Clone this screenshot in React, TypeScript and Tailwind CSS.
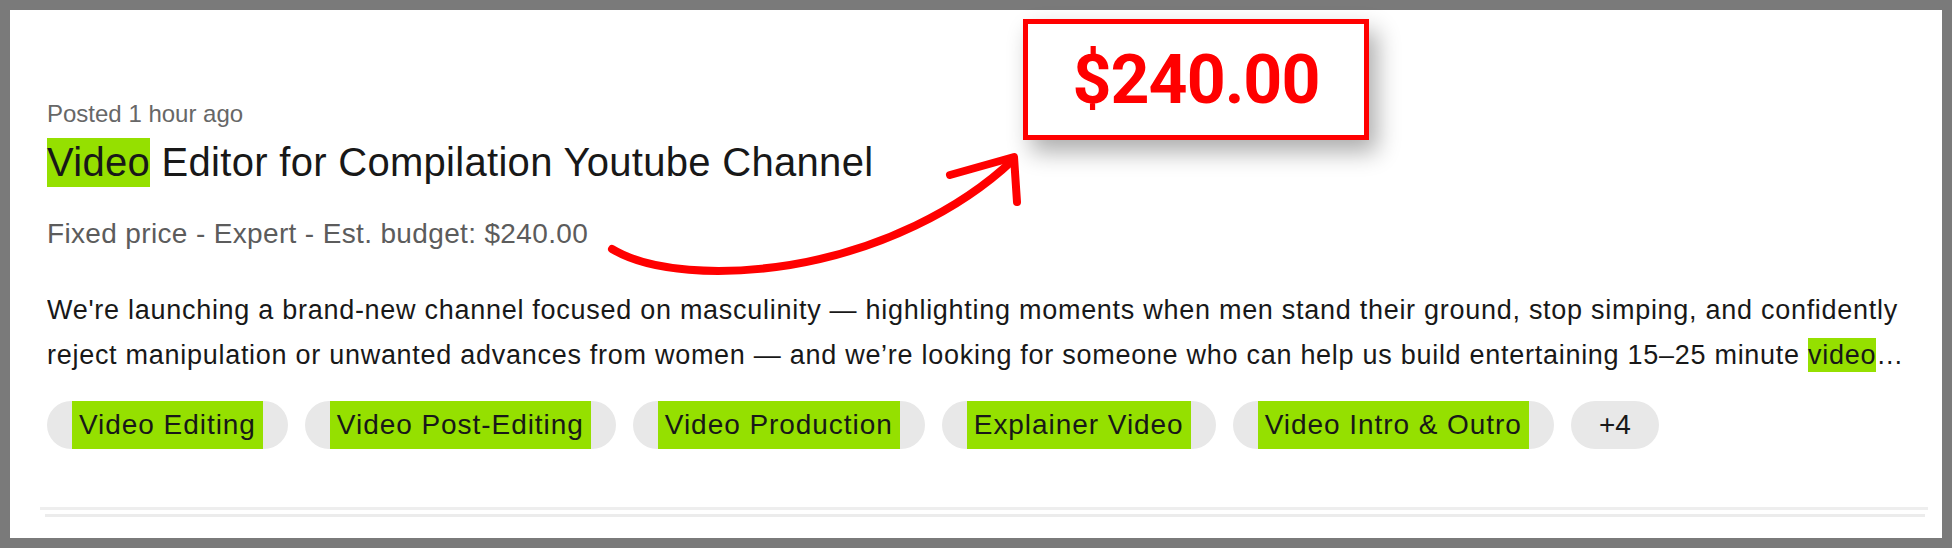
import React from 'react';

const tags = ['Video Editing', 'Video Post-Editing', 'Video Production', 'Explainer Video', 'Video Intro & Outro'];

const sans = { fontFamily: '"Liberation Sans", Arial, sans-serif' };

function Tag({ label }: { label: string }) {
  return (
    <div className="flex h-[48px] items-stretch rounded-full bg-[#e8e8e8] px-[25px]">
      <span className="flex items-center bg-[#95e000] px-[7px] text-[28px] leading-none tracking-[0.95px] text-[#181818]">
        {label}
      </span>
    </div>
  );
}

// red annotation over the card: boxed price + hand drawn arrow
function PriceCallout() {
  return (
    <>
      <div className="absolute left-[1013px] top-[9px] flex h-[121px] w-[346px] items-center justify-center border-[5px] border-[#ff0000] bg-white shadow-[8px_12px_22px_rgba(0,0,0,0.32)]">
        <span className="font-['Roboto'] text-[68px] font-bold leading-none tracking-[-1px] text-[#ff0000]">$240.00</span>
      </div>
      <svg className="pointer-events-none absolute left-[-10px] top-[-10px]" width="1952" height="548" viewBox="0 0 1952 548">
        <path
          d="M612 249 C 650 272, 720 276, 790 265 C 880 250, 960 210, 1013 160"
          fill="none"
          stroke="#ff0000"
          strokeWidth="8"
          strokeLinecap="round"
        />
        <path d="M950 175 L1014 157 L1017 202" fill="none" stroke="#ff0000" strokeWidth="8" strokeLinecap="round" strokeLinejoin="round" />
      </svg>
    </>
  );
}

export default function App() {
  return (
    <div className="relative h-[548px] w-[1952px] border-[10px] border-[#7a7a7a] bg-white" style={sans}>
      <div className="flex flex-col pt-[88px]">
        <div className="px-[37px]">
          <p className="text-[24px] leading-[32px] text-[#676767]">Posted 1 hour ago</p>
          <h2 className="mt-[8px] text-[40px] leading-[49px] tracking-[0.3px] text-[#181818]">
            <span className="inline-block bg-[#95e000]">Video</span> Editor for Compilation Youtube Channel
          </h2>
          <p className="mt-[31px] text-[28px] leading-[32px] tracking-[0.35px] text-[#5c5c5c]">
            Fixed price - Expert - Est. budget: $240.00
          </p>
          <p className="mt-[38px] line-clamp-2 text-[27px] leading-[45px] tracking-[0.72px] text-[#181818]">
            We're launching a brand-new channel focused on masculinity — highlighting moments when men stand their ground, stop simping, and confidently reject manipulation or unwanted advances from women — and we’re looking for someone who can help us build entertaining 15–25 minute <span className="bg-[#95e000] py-[2px]">video</span>…
          </p>
          <div className="mt-[23px] flex gap-[17px]">
            {tags.map((t) => (
              <Tag key={t} label={t} />
            ))}
            <div className="flex h-[48px] items-center rounded-full bg-[#e8e8e8] px-[28px] text-[28px] text-[#181818]">+4</div>
          </div>
        </div>
        <div className="mt-[58px] ml-[30px] mr-[14px] h-[3px] bg-[#eeeeee]" />
        <div className="mt-[4px] ml-[35px] mr-[17px] h-[3px] bg-[#ececec]" />
      </div>
      <PriceCallout />
    </div>
  );
}
